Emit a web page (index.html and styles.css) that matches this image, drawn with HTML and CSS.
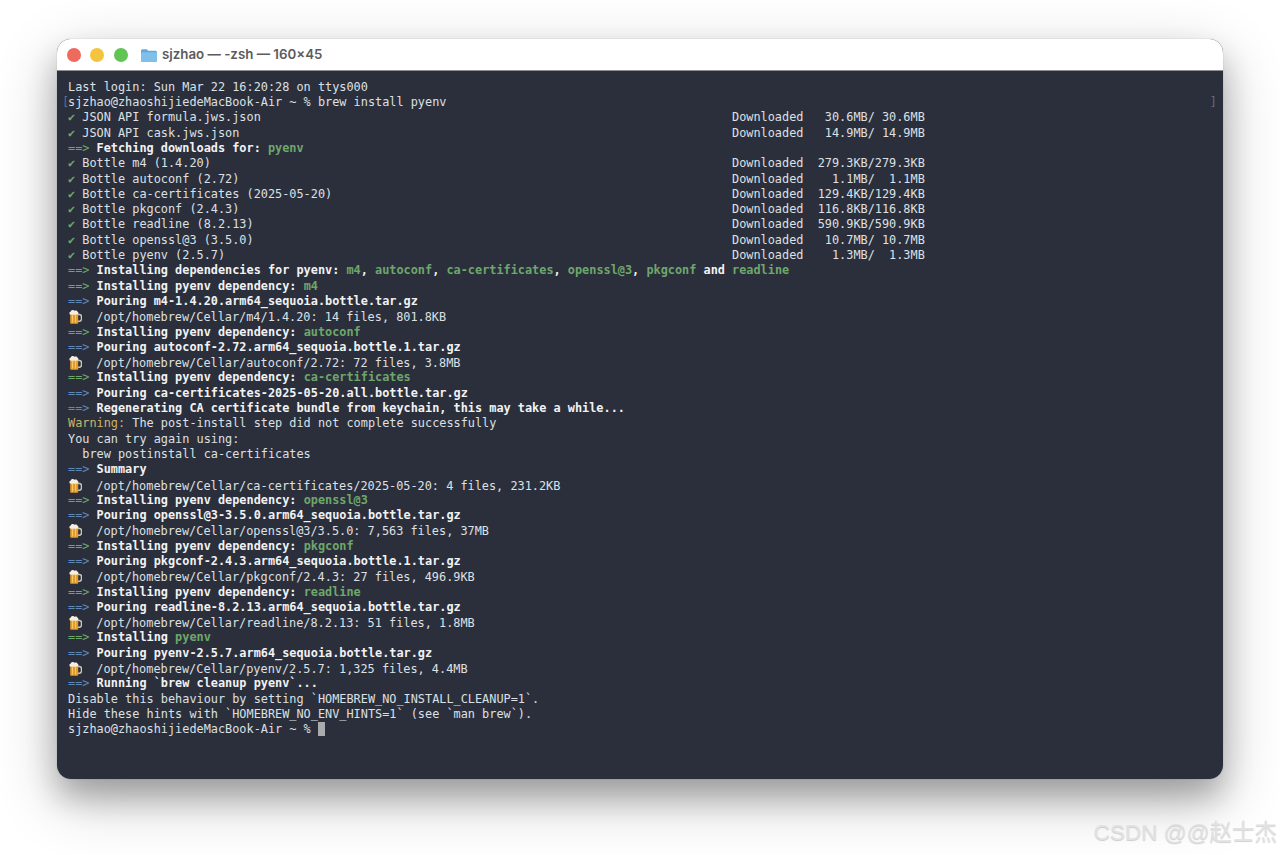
FILE: index.html
```html
<!DOCTYPE html>
<html lang="en">
<head>
<meta charset="utf-8">
<title>sjzhao — -zsh — 160×45</title>
<link rel="stylesheet" href="styles.css">
</head>
<body>
<svg class="defs" width="0" height="0" aria-hidden="true"><defs>
<symbol id="beer" viewBox="0 0 14 15">
<path d="M10 5.5h1.6c1.3 0 1.9.9 1.9 2.6v1.6c0 1.6-.8 2.5-2 2.5H10" fill="none" stroke="#c9c6bd" stroke-width="1.5"/>
<path d="M2.2 4.5h8v9.2c0 .7-.5 1.1-1.1 1.1H3.3c-.6 0-1.1-.4-1.1-1.1z" fill="#e29a2c"/>
<path d="M4.5 6v7.5M7.6 6v7.5" stroke="#f6c866" stroke-width="1.1"/>
<path d="M2 5.6C.9 4.6 1.3 2.6 2.8 2.5 3.3.9 5.6.7 6.4 1.8c1.2-.9 3.2-.2 3.3 1.2 1.1.4 1.1 2.200 0 2.600-1 .3-7.100.3-7.700 0z" fill="#f4efe3"/>
</symbol>
</defs></svg>
<main class="window">
<header class="titlebar">
<div class="lights"><span class="light red"></span><span class="light yellow"></span><span class="light green"></span></div>
<svg class="folder" viewBox="0 0 16 13" width="16" height="13" aria-hidden="true">
<path d="M0 2c0-1 .6-1.700 1.600-1.700h3.600c.7 0 1 .3 1.400.8l.6.700h7.100c1 0 1.700.6 1.700 1.600v8c0 1-.7 1.600-1.700 1.600H1.600C.6 13 0 12.400 0 11.400z" fill="#5ea9dd"/>
<path d="M0 4.300c0-.6.5-1 1-1h14c.5 0 1 .4 1 1v7.100c0 1-.7 1.600-1.700 1.600H1.600C.6 13 0 12.400 0 11.400z" fill="#7fbfea"/>
</svg>
<h1 class="title">sjzhao — -zsh — 160×45</h1>
</header>
<section class="term">
<div class="line">Last login: Sun Mar 22 16:20:28 on ttys000</div>
<div class="line marked"><span class="mark left">[</span>sjzhao@zhaoshijiedeMacBook-Air ~ % brew install pyenv<span class="mark right">]</span></div>
<div class="line"><span class="col"><span class="g">✔</span> JSON API formula.jws.json</span>Downloaded   30.6MB/ 30.6MB</div>
<div class="line"><span class="col"><span class="g">✔</span> JSON API cask.jws.json</span>Downloaded   14.9MB/ 14.9MB</div>
<div class="line"><span class="g">==&gt;</span> <b>Fetching downloads for: </b><b class="g">pyenv</b></div>
<div class="line"><span class="col"><span class="g">✔</span> Bottle m4 (1.4.20)</span>Downloaded  279.3KB/279.3KB</div>
<div class="line"><span class="col"><span class="g">✔</span> Bottle autoconf (2.72)</span>Downloaded    1.1MB/  1.1MB</div>
<div class="line"><span class="col"><span class="g">✔</span> Bottle ca-certificates (2025-05-20)</span>Downloaded  129.4KB/129.4KB</div>
<div class="line"><span class="col"><span class="g">✔</span> Bottle pkgconf (2.4.3)</span>Downloaded  116.8KB/116.8KB</div>
<div class="line"><span class="col"><span class="g">✔</span> Bottle readline (8.2.13)</span>Downloaded  590.9KB/590.9KB</div>
<div class="line"><span class="col"><span class="g">✔</span> Bottle openssl@3 (3.5.0)</span>Downloaded   10.7MB/ 10.7MB</div>
<div class="line"><span class="col"><span class="g">✔</span> Bottle pyenv (2.5.7)</span>Downloaded    1.3MB/  1.3MB</div>
<div class="line"><span class="g">==&gt;</span> <b>Installing dependencies for pyenv: </b><b class="g">m4</b><b>, </b><b class="g">autoconf</b><b>, </b><b class="g">ca-certificates</b><b>, </b><b class="g">openssl@3</b><b>, </b><b class="g">pkgconf</b><b> and </b><b class="g">readline</b></div>
<div class="line"><span class="g">==&gt;</span> <b>Installing pyenv dependency: </b><b class="g">m4</b></div>
<div class="line"><span class="b">==&gt;</span> <b>Pouring m4-1.4.20.arm64_sequoia.bottle.tar.gz</b></div>
<div class="line"><svg class="mug"><use href="#beer"/></svg>  /opt/homebrew/Cellar/m4/1.4.20: 14 files, 801.8KB</div>
<div class="line"><span class="g">==&gt;</span> <b>Installing pyenv dependency: </b><b class="g">autoconf</b></div>
<div class="line"><span class="b">==&gt;</span> <b>Pouring autoconf-2.72.arm64_sequoia.bottle.1.tar.gz</b></div>
<div class="line"><svg class="mug"><use href="#beer"/></svg>  /opt/homebrew/Cellar/autoconf/2.72: 72 files, 3.8MB</div>
<div class="line"><span class="g">==&gt;</span> <b>Installing pyenv dependency: </b><b class="g">ca-certificates</b></div>
<div class="line"><span class="b">==&gt;</span> <b>Pouring ca-certificates-2025-05-20.all.bottle.tar.gz</b></div>
<div class="line"><span class="b">==&gt;</span> <b>Regenerating CA certificate bundle from keychain, this may take a while...</b></div>
<div class="line"><span class="w">Warning:</span> The post-install step did not complete successfully</div>
<div class="line">You can try again using:</div>
<div class="line">  brew postinstall ca-certificates</div>
<div class="line"><span class="b">==&gt;</span> <b>Summary</b></div>
<div class="line"><svg class="mug"><use href="#beer"/></svg>  /opt/homebrew/Cellar/ca-certificates/2025-05-20: 4 files, 231.2KB</div>
<div class="line"><span class="g">==&gt;</span> <b>Installing pyenv dependency: </b><b class="g">openssl@3</b></div>
<div class="line"><span class="b">==&gt;</span> <b>Pouring openssl@3-3.5.0.arm64_sequoia.bottle.tar.gz</b></div>
<div class="line"><svg class="mug"><use href="#beer"/></svg>  /opt/homebrew/Cellar/openssl@3/3.5.0: 7,563 files, 37MB</div>
<div class="line"><span class="g">==&gt;</span> <b>Installing pyenv dependency: </b><b class="g">pkgconf</b></div>
<div class="line"><span class="b">==&gt;</span> <b>Pouring pkgconf-2.4.3.arm64_sequoia.bottle.1.tar.gz</b></div>
<div class="line"><svg class="mug"><use href="#beer"/></svg>  /opt/homebrew/Cellar/pkgconf/2.4.3: 27 files, 496.9KB</div>
<div class="line"><span class="g">==&gt;</span> <b>Installing pyenv dependency: </b><b class="g">readline</b></div>
<div class="line"><span class="b">==&gt;</span> <b>Pouring readline-8.2.13.arm64_sequoia.bottle.tar.gz</b></div>
<div class="line"><svg class="mug"><use href="#beer"/></svg>  /opt/homebrew/Cellar/readline/8.2.13: 51 files, 1.8MB</div>
<div class="line"><span class="g">==&gt;</span> <b>Installing </b><b class="g">pyenv</b></div>
<div class="line"><span class="b">==&gt;</span> <b>Pouring pyenv-2.5.7.arm64_sequoia.bottle.tar.gz</b></div>
<div class="line"><svg class="mug"><use href="#beer"/></svg>  /opt/homebrew/Cellar/pyenv/2.5.7: 1,325 files, 4.4MB</div>
<div class="line"><span class="b">==&gt;</span> <b>Running `brew cleanup pyenv`...</b></div>
<div class="line">Disable this behaviour by setting `HOMEBREW_NO_INSTALL_CLEANUP=1`.</div>
<div class="line">Hide these hints with `HOMEBREW_NO_ENV_HINTS=1` (see `man brew`).</div>
<div class="line">sjzhao@zhaoshijiedeMacBook-Air ~ % <span class="cursor"></span></div>
</section>
</main>
<div class="watermark">CSDN @@赵士杰</div>
</body>
</html>
```
FILE: styles.css
```css
* { box-sizing: border-box; }
html, body { margin: 0; height: 855px; overflow: hidden; background: #fff; }
body { padding: 39px 57px 0; position: relative; }
.defs { position: absolute; }
.window {
  width: 1166px;
  height: 740px;
  border-radius: 14px;
  overflow: hidden;
  background: #2b2f3b;
  box-shadow: 0 0 0 1px rgba(0,0,0,.04), 0 18px 30px rgba(0,0,0,.24), 0 20px 62px rgba(0,0,0,.24);
}
.titlebar {
  height: 32px;
  background: #fff;
  border-bottom: 1px solid #8d8f95;
  display: flex;
  align-items: center;
  padding: 1px 0 0 9.500px;
}
.lights { display: flex; gap: 9.500px; }
.light { width: 14px; height: 14px; border-radius: 50%; }
.red { background: #ee6a5f; }
.yellow { background: #f5c43f; }
.green { background: #61c454; }
.folder { margin-left: 13.500px; margin-right: 5px; }
.title {
  margin: 0;
  font: 600 13.300px/1 Inter, "Noto Sans", sans-serif;
  color: #5c5c5c;
}
.term {
  padding: 8.800px 11px 0;
  font-family: "DejaVu Sans Mono", "Liberation Mono", monospace;
  font-size: 11.860px;
  color: #dde0e5;
}
.line { height: 15.310px; line-height: 15.310px; white-space: pre; position: relative; }
.col { display: inline-block; width: 93ch; }
.g { color: #6ea76c; }
.b { color: #5d88b8; }
.w { color: #cdb36a; }
b { font-weight: 700; color: #f1f2f4; }
b.g { color: #6ea76c; }
.mark { position: absolute; color: #5f6c8c; }
.left { left: -6px; }
.right { right: -5px; }
.mug { display: inline-block; width: 14px; height: 15px; vertical-align: -3px; }
.cursor { display: inline-block; width: 7px; height: 14px; background: #a9abad; vertical-align: -3px; }
.watermark {
  position: absolute;
  right: 3px;
  top: 819px;
  font: 400 22.500px/28px "Liberation Sans", "Noto Sans CJK SC", sans-serif;
  color: #e2e2e2;
  text-shadow: 0 1px 1px rgba(0,0,0,.18);
}
```
